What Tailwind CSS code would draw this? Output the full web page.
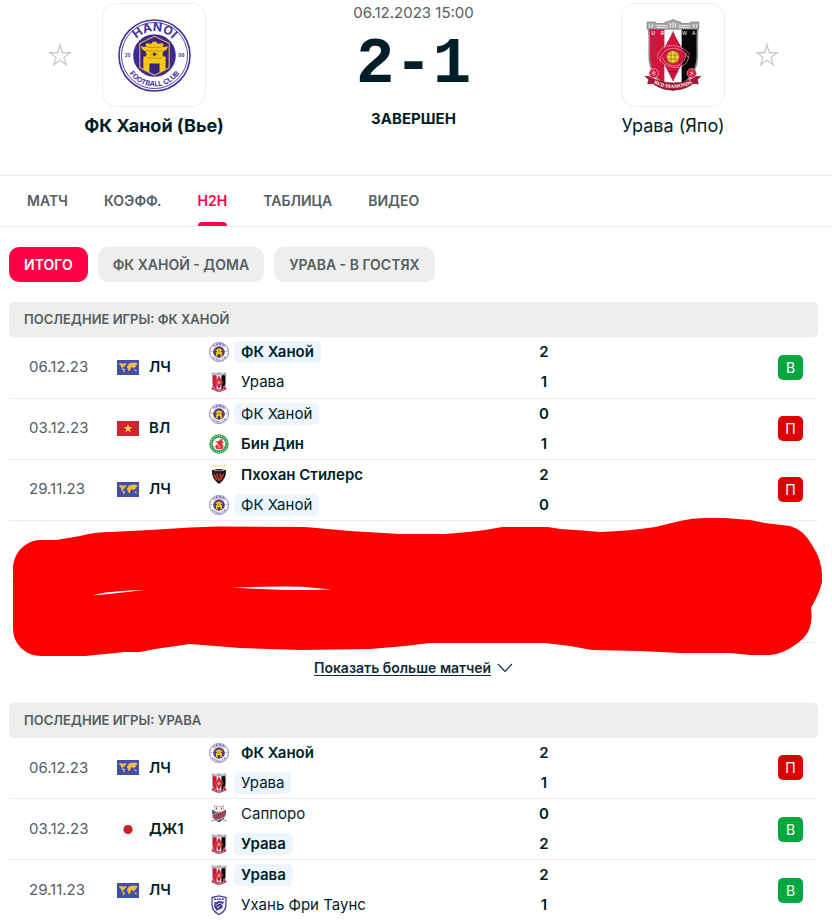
<!DOCTYPE html>
<html lang="ru">
<head>
  <meta charset="UTF-8">
  <meta name="viewport" content="width=device-width, initial-scale=1.0">
  <title>ФК Ханой - Урава 2-1 | H2H</title>
  <script src="https://cdn.jsdelivr.net/npm/@tailwindcss/browser@4"></script>
</head>
<body class="bg-white font-['Inter','Noto_Sans',sans-serif] text-[#001e28]">

  <!-- Small crests and flags -->
  <svg class="absolute size-0" aria-hidden="true">
    <symbol id="binhdinh" viewBox="0 0 20 20">
      <circle cx="10" cy="10" r="9.700" fill="#2c9a4b"/>
      <circle cx="10" cy="10" r="8.100" fill="none" stroke="#a9dbb5" stroke-width="1.200" stroke-dasharray="1.200 .9"/>
      <circle cx="10" cy="10" r="6.300" fill="#fff"/>
      <path d="M6 6.500 9 7.500l3-2.500 2 .5-1 1.500 2 1-2 1.500 1.500 3-1 2.500h-6L6 12.500l1.500-2L9 11l-.5-2z" fill="#e02b35"/>
      <path d="M8 12l3-1M9 14l3-1.500" stroke="#fff" stroke-width=".6"/>
    </symbol>

    <symbol id="pohang" viewBox="0 0 20 20">
      <path d="M4 1h12" stroke="#f3d968" stroke-width="1.400" stroke-dasharray="1.600 1"/>
      <path d="M3 5c2 0 3.500-.4 4.500-1h5c1 .6 2.500 1 4.500 1-.3 1.800.3 3-.5 5.500C15.500 14 13 17 10 19 7 17 4.500 14 3.500 10.500 2.700 8 3.300 6.800 3 5z" fill="#221a1c"/>
      <path d="M5 5.500h10" stroke="#8d8582" stroke-width="1.200"/>
      <path d="M5 9l3 6M7.500 8.500l3 7.500M10.500 8.500l2 5M14.500 9l-3.500 6" stroke="#d2382d" stroke-width="1.500"/>
    </symbol>

    <symbol id="sapporo" viewBox="0 0 20 20">
      <path d="M3 6h14c0 6-1 9-7 12.500C4 15 3 12 3 6z" fill="#4d5560"/>
      <path d="M5.500 1.500l2.500 1h4l2.500-1v4l1 1-2 1.500h-7l-2-1.500 1-1z" fill="#f3f1f0" stroke="#777" stroke-width=".5"/>
      <path d="M7.500 3.500v2M12.500 3.500v2" stroke="#c22b39"/>
      <path d="M3.500 13.500l12.500-6M5.500 16l11-6" stroke="#d4374a" stroke-width="1.500"/>
      <path d="M3.500 11l8-3.500M7 17.500l9-5" stroke="#c7ccd1" stroke-width=".8"/>
      <path d="M2.500 17l4-1.500h7l4 1.500" fill="none" stroke="#8a9097" stroke-width="1.200"/>
    </symbol>

    <symbol id="wuhan" viewBox="0 0 20 20">
      <path d="M3 2.500 10 .8l7 1.700c-.3 3 .3 6-.3 9.500C16 15.500 13 18 10 19.500 7 18 4 15.500 3.300 12 2.700 8.500 3.300 5.500 3 2.500z" fill="#f4f4fc" stroke="#4a4896" stroke-width="1.300"/>
      <path d="M5 4.200h10" stroke="#4a4896" stroke-width="1.600" stroke-dasharray="2 .6"/>
      <path d="M5 7c2 1 3-1 5-1s3.500 1 5 .5c0 2-1.500 2-2 3.500 1.500 1 .5 3.500-1.500 4S9 15.500 7.500 16C7.500 14 5 13.500 5 11c1-1 .5-2 0-4z" fill="#4a4896"/>
      <path d="M7 10.500l3-2 3 .5M8 13l3-2" stroke="#f4f4fc" stroke-width=".8"/>
    </symbol>

    <symbol id="world" viewBox="0 0 22 15">
      <path fill="#3f4fae" d="M0 0h22v15H0z"/>
      <path fill="#f5bb3d" d="M2 3.500l2.500-.5 2 .7L9 3l.8 1L8 5.500 7 7l-1.500.5L6.500 9l1.500.5-.3 1.500L6.500 13 6 10 4.500 8 4 6 2.500 5zM11 5l1-1.500 2-.5 3-.5 3.500.8-.5 1.700-1.200.5-.3 1.800-1.500.2-.6 1.300-1-1.800-1.400.5-1 3-1.200 1-1-3-1-.7.5-1.800zM17.500 9.500l2 .3.3 1.700-2-.5z"/>
    </symbol>
    <symbol id="vietnam" viewBox="0 0 22 15">
      <path fill="#cb2530" d="M0 0h22v15H0z"/>
      <path fill="#f9d342" d="M11 3l1.100 3.200h3.300l-2.700 2 1 3.300L11 9.500l-2.700 2 1-3.300-2.700-2h3.300z"/>
    </symbol>
    <symbol id="japan" viewBox="0 0 22 15">
      <path fill="#fcfafa" d="M0 0h22v15H0z"/>
      <circle cx="11" cy="7.500" r="4.600" fill="#c5202c"/>
    </symbol>

    <symbol id="star" viewBox="0 0 24 24">
      <path d="M12 2l2.500 7.700H22.300L16 14.300l2.400 7.600L12 17.300l-6.400 4.600L8 14.300 1.700 9.700h7.800z" fill="none" stroke="#c8cdcd" stroke-width="1.400"/>
    </symbol>
  </svg>

  <header class="flex justify-between h-[175px] pt-[3px] pl-12 pr-[53px]">
    <div class="flex items-start">
      <button type="button" class="mt-10" aria-label="Добавить ФК Ханой в избранное"><svg class="size-6"><use href="#star"/></svg></button>
      <div class="flex flex-col items-center w-[164px]">
        <div class="flex items-center justify-center size-[104px] border border-[#eeeeee] rounded-[14px]">
          <svg class="size-[73px]">
            <svg id="hanoi" viewBox="0 0 72 72">
              <circle cx="36" cy="36" r="35" fill="#fff" stroke="#46339a" stroke-width="1.600"/>
              <circle cx="36" cy="36" r="32.600" fill="none" stroke="#46339a" stroke-width=".9"/>
              <circle cx="36" cy="36" r="21" fill="#3d2b8e"/>
              <path d="M36 17 50.500 24v24L36 55.500 21.500 48V24z" fill="#35257f" stroke="#c9a070" stroke-width="1.300"/>
              <path d="M34 22.500h4l1 2 5-.5 1 2-1.500 1.500 6-.5-2 3.500-3 1.500v2h-1l1 3h2.500v13l-6 3v-9H31v9l-6-3V37h2.500l1-3h-1v-2l-3-1.500-2-3.500 6 .5L27 26l1-2 5 .5z" fill="#f6c812"/>
              <path d="M29 28h14M27.500 31.500h17M28.500 38.500h15" stroke="#b98a25" stroke-width=".8"/>
              <path d="M31.500 33.300h9v3.200h-9z" fill="#dfae1c"/>
              <path d="M36 33l2 1.500-2 2.200-2-2.200z" fill="#35257f"/>
              <path id="hanoi-top" d="M12 36a24 24 0 0 1 48 0" fill="none"/>
              <path id="hanoi-bottom" d="M5.500 36a30.500 30.500 0 0 0 61 0" fill="none"/>
              <text font-family="Inter, sans-serif" font-weight="700" font-size="12" fill="#46339a" text-anchor="middle"><textPath href="#hanoi-top" startOffset="50%">HANOI</textPath></text>
              <text font-family="Inter, sans-serif" font-weight="700" font-size="7" fill="#46339a" text-anchor="middle"><textPath href="#hanoi-bottom" startOffset="50%">FOOTBALL CLUB</textPath></text>
              <text x="9.500" y="37.500" font-family="Inter, sans-serif" font-weight="700" font-size="4.500" fill="#46339a" text-anchor="middle">20</text>
              <text x="62.500" y="37.500" font-family="Inter, sans-serif" font-weight="700" font-size="4.500" fill="#46339a" text-anchor="middle">06</text>
            </svg>
          </svg>
        </div>
        <h2 class="mt-1.5 text-lg leading-[26px] font-bold whitespace-nowrap">ФК Ханой (Вье)</h2>
      </div>
    </div>

    <div class="text-center">
      <p class="text-[15px] leading-5 text-[#555e61]">06.12.2023 15:00</p>
      <p class="mt-3 text-[64px] leading-[60px] font-bold font-['Liberation_Mono',monospace]">2-1</p>
      <p class="mt-3.5 text-[15px] leading-5 font-bold">ЗАВЕРШЕН</p>
    </div>

    <div class="flex items-start">
      <div class="flex flex-col items-center w-[164px]">
        <div class="flex items-center justify-center size-[104px] border border-[#eeeeee] rounded-[14px]">
          <svg class="w-[58px] h-[73px]">
            <svg id="urawa" viewBox="0 0 57 72">
              <clipPath id="urawa-shield"><path d="M4.500 9h48.500c-1 9-.5 17-.5 27 0 17-9 26-24 34.500C13.500 62 5 53 5 36c0-10 .5-18-.5-27z"/></clipPath>
              <g clip-path="url(#urawa-shield)">
                <path fill="#fff" d="M0 0h57v72H0z"/>
                <path fill="#d3143c" d="M0 9h20v60H0z"/>
                <path fill="#070707" d="M37 9h20v60H37z"/>
              </g>
              <path d="M4.500 9h48.500c-1 9-.5 17-.5 27 0 17-9 26-24 34.500C13.500 62 5 53 5 36c0-10 .5-18-.5-27z" fill="none" stroke="#8c8c8c" stroke-width="1.600"/>
              <path d="M3 3h8v1.500h10V3l3-.5 4.500-2 4.500 2 3 .5v1.500h10V3h8v7H3z" fill="#a9a9a9" stroke="#6f6f6f" stroke-width=".7"/>
              <path d="M5 5v4M8 5v4M12 6.500h11M12 8.500h11M26 4v5M28.500 3v6M31 4v5M34 6.500h11M34 8.500h11M49 5v4M52 5v4" stroke="#eee" stroke-width=".9"/>
              <g font-family="Inter, sans-serif" font-weight="600" font-size="5" text-anchor="middle">
                <text x="9" y="16" fill="#eee">U</text><text x="18" y="16" fill="#eee">R</text><text x="28.500" y="16" fill="#777">A</text><text x="40" y="16" fill="#ccc">W</text><text x="49" y="16" fill="#ccc">A</text>
              </g>
              <path d="M28.500 13.500 41 36 28.500 61 16 36z" fill="#d3143c" stroke="#7e1028" stroke-width=".6"/>
              <g fill="none" stroke="#f08a9e" stroke-width=".8">
                <path d="M13 38c1-9 10-14 20-11 6 2 10 5 12 8"/>
                <path d="M16 42c-1-8 6-14 15-13 6 1 11 5 12 9"/>
                <path d="M44 36c0 9-9 14-18 11-6-2-10-5-12-9"/>
                <path d="M41 33c1 8-5 14-13 13-5-1-9-4-10-8"/>
              </g>
              <circle cx="28.500" cy="37.500" r="6.200" fill="#f0d43a" stroke="#8a4a12" stroke-width=".7"/>
              <path d="M23 35.500h11M23 39.500h11M26.500 32v11M30.500 32v11" stroke="#8f6c17" stroke-width=".7"/>
              <path d="M24 52h9" stroke="#7e1028"/>
              <path d="M1 56.500 7 57c5 4 12 6 21.500 6s16.500-2 21.500-6l6-.5-3.500 3.500 1 4-5-.5c-6 4.500-12 6.500-20 6.500s-14-2-20-6.500l-5 .5 1-4z" fill="#a91734" stroke="#5e1020" stroke-width=".6"/>
              <path id="urawa-ribbon" d="M5 61q23.500 14 47 0" fill="none"/>
              <text font-family="'Liberation Serif', serif" font-weight="700" font-size="5" fill="#fff" text-anchor="middle"><textPath href="#urawa-ribbon" startOffset="50%">RED DIAMONDS</textPath></text>
              <g fill="#d3143c" stroke="#f4b5c0" stroke-width=".7">
                <circle cx="9.500" cy="53.500" r="4.600"/><circle cx="47" cy="53.500" r="4.600"/>
                <path fill="none" d="M7 52l5 3M7 55l5-3M9.500 50.500v6M44.500 52l5 3M44.500 55l5-3M47 50.500v6"/>
              </g>
            </svg>
          </svg>
        </div>
        <h2 class="mt-1.5 text-lg leading-[26px] whitespace-nowrap">Урава (Япо)</h2>
      </div>
      <button type="button" class="mt-10" aria-label="Добавить Урава в избранное"><svg class="size-6"><use href="#star"/></svg></button>
    </div>
  </header>

  <nav class="flex gap-9 h-[52px] pl-[27px] border-y border-[#eeeeee] text-sm font-semibold text-[#555e61]">
    <a href="#" class="flex items-center">МАТЧ</a>
    <a href="#" class="flex items-center">КОЭФФ.</a>
    <a href="#" class="relative flex items-center text-[#ff0046]">H2H
      <span class="absolute inset-x-0 bottom-0 h-1 rounded-t bg-[#ff0046]"></span>
    </a>
    <a href="#" class="flex items-center">ТАБЛИЦА</a>
    <a href="#" class="flex items-center">ВИДЕО</a>
  </nav>

  <main class="pt-5 pl-[9px] pr-3.5">
    <div class="flex gap-2.5 mb-5 text-sm font-semibold text-[#555e61]">
      <button type="button" class="h-[35px] px-[15px] rounded-[10px] bg-[#ff0046] text-white">ИТОГО</button>
      <button type="button" class="h-[35px] px-[15px] rounded-[10px] bg-[#eeeeee]">ФК ХАНОЙ - ДОМА</button>
      <button type="button" class="h-[35px] px-[15px] rounded-[10px] bg-[#eeeeee]">УРАВА - В ГОСТЯХ</button>
    </div>

    <section>
      <h3 class="pl-[15px] rounded-[5px] bg-[#eeeeee] text-[13px] leading-[35px] font-semibold text-[#555e61]">ПОСЛЕДНИЕ ИГРЫ: ФК ХАНОЙ</h3>
      <div class="relative">
        <table class="w-full table-fixed">
          <tbody id="hanoi-games"></tbody>
        </table>
        <svg class="absolute inset-x-0 bottom-0 w-full h-[122px] overflow-visible" viewBox="9 521 809 122" preserveAspectRatio="none" aria-hidden="true">
          <path fill="#ff0000" d="M13 568C14 552 25 541 40 540L56 540 80 536Q95 532 110 532L150 530 190 527.500 217 526.500 305 527 350 531 400 534 445 534Q470 532 485 530L502 527H548L560 529 583 530.500 600 532Q630 531 655 527L680 521Q692 518 705 518H725L750 520 765 523 790 526Q804 530 812 545 822 560 822 575V582Q820 592 811 608 813 622 808 632 803 640 795 645 784 653 771 655H750L730 653H680L640 651 592 650 570 646 545 643H430L405 646 370 649 300 650 240 648 190 644 155 649 140 652H125L85 656H42C25 656 13 644 13 628z"/>
          <path fill="#fff" d="M93 595.500Q105 591 144 590 120 593 93 595.500zM232 587.500Q290 586 305 587L332 589.500Q290 591 232 587.500z"/>
        </svg>
      </div>
      <div class="flex items-center justify-center gap-1.5 h-[50px] mb-2.5">
        <a href="#" class="text-sm font-semibold text-[#0f2d37] underline underline-offset-2">Показать больше матчей</a>
        <svg class="w-4 h-2.5" viewBox="0 0 16 10" fill="none" stroke="#0f2d37" stroke-width="1.100"><path d="M1 1l7 7.500L15 1"/></svg>
      </div>
    </section>

    <section>
      <h3 class="pl-[15px] rounded-[5px] bg-[#eeeeee] text-[13px] leading-[35px] font-semibold text-[#555e61]">ПОСЛЕДНИЕ ИГРЫ: УРАВА</h3>
      <table class="w-full table-fixed">
        <tbody id="urawa-games"></tbody>
      </table>
    </section>
  </main>

<script>
const icons = {
  'ФК Ханой': 'hanoi', 'Урава': 'urawa', 'Бин Дин': 'binhdinh',
  'Пхохан Стилерс': 'pohang', 'Саппоро': 'sapporo', 'Ухань Фри Таунс': 'wuhan'
};

// [date, flag, league, home, away, home goals, away goals, result]
const hanoiGames = [
  ['06.12.23', 'world', 'ЛЧ', 'ФК Ханой', 'Урава', 2, 1, 'В'],
  ['03.12.23', 'vietnam', 'ВЛ', 'ФК Ханой', 'Бин Дин', 0, 1, 'П'],
  ['29.11.23', 'world', 'ЛЧ', 'Пхохан Стилерс', 'ФК Ханой', 2, 0, 'П'],
  null,
  null
];
const urawaGames = [
  ['06.12.23', 'world', 'ЛЧ', 'ФК Ханой', 'Урава', 2, 1, 'П'],
  ['03.12.23', 'japan', 'ДЖ1', 'Саппоро', 'Урава', 0, 2, 'В'],
  ['29.11.23', 'world', 'ЛЧ', 'Урава', 'Ухань Фри Таунс', 2, 1, 'В']
];

function team(name, own, won) {
  return `<div class="flex items-center gap-[5px] h-[30px]">
    <svg class="size-5"><use href="#${icons[name]}"/></svg>
    <span class="px-[7px] rounded-[5px] leading-[22px] whitespace-nowrap ${name === own ? 'bg-[#edf6ff]' : ''} ${won ? 'font-semibold' : ''}">${name}</span>
  </div>`;
}

function row(game, own) {
  if (!game) return '<tr class="h-[61px] border-b border-[#eeeeee]"><td colspan="5"></td></tr>';
  const [date, flag, league, home, away, hg, ag, result] = game;
  return `<tr class="h-[61px] border-b border-[#eeeeee] text-[15px]">
    <td class="w-[108px] p-0 pl-5 text-[#555e61]">${date}</td>
    <td class="w-[92px] p-0">
      <div class="flex items-center gap-2.5 font-semibold"><svg class="w-[22px] h-[15px]"><use href="#${flag}"/></svg>${league}</div>
    </td>
    <td class="p-0">${team(home, own, hg > ag)}${team(away, own, ag > hg)}</td>
    <td class="w-[46px] p-0 text-center font-semibold leading-[30px]">${hg}<br>${ag}</td>
    <td class="w-[251px] p-0 pr-[15px]">
      <span class="block size-[25px] ml-auto rounded-[5px] text-center text-sm leading-[25px] text-white ${result === 'В' ? 'bg-[#00a83f]' : 'bg-[#dc0000]'}">${result}</span>
    </td>
  </tr>`;
}

document.getElementById('hanoi-games').innerHTML = hanoiGames.map(g => row(g, 'ФК Ханой')).join('');
document.getElementById('urawa-games').innerHTML = urawaGames.map(g => row(g, 'Урава')).join('');
</script>
</body>
</html>
